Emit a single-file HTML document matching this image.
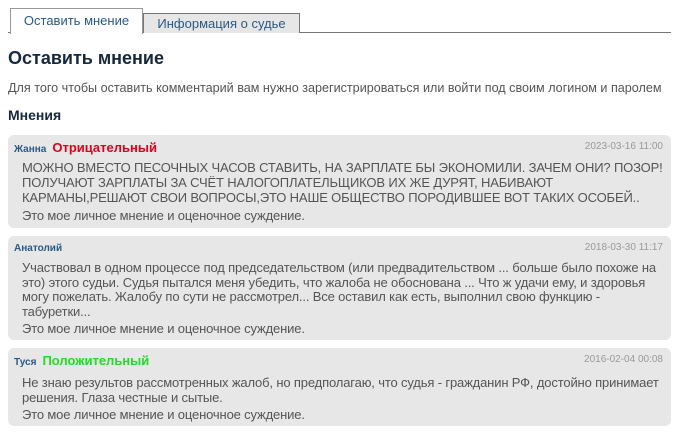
<!DOCTYPE html>
<html><head><meta charset="utf-8"><style>
body{margin:0;width:680px;height:441px;background:#fff;font-family:"Liberation Sans",Arial,sans-serif;position:relative;overflow:hidden}
.a{position:absolute;white-space:nowrap}
.tabline{position:absolute;left:8px;top:32px;width:663px;height:1px;background:#777}
.t1{position:absolute;left:10px;top:8px;width:131px;height:25px;border:1px solid #999;border-bottom:none;background:#fff;color:#2a5a85;font-size:13px;text-align:center;line-height:24px}
.t2{position:absolute;left:143px;top:13px;width:155px;height:19px;border:1px solid #777;border-bottom:none;background:#e6e6e6;color:#2a5a85;font-size:13px;text-align:center;line-height:20px}
.box{position:absolute;left:8px;width:663px;background:#e7e7e7;border-radius:6px}
.n{position:absolute;left:6px;font-size:10px;font-weight:bold;color:#2a5a85}
.r{font-size:13px;font-weight:bold;margin-left:6px}
.d{position:absolute;right:8px;font-size:10px;color:#999}
.tx{position:absolute;left:14px;font-size:13px;color:#555;line-height:15px;width:648px;letter-spacing:-0.15px}
</style></head><body>
<div class="tabline"></div>
<div class="t1">Оставить мнение</div>
<div class="t2">Информация о судье</div>
<div class="a" style="left:8px;top:48px;font-size:18px;font-weight:bold;color:#16283d">Оставить мнение</div>
<div class="a" style="left:8px;top:81px;font-size:12.6px;color:#555">Для того чтобы оставить комментарий вам нужно зарегистрироваться или войти под своим логином и паролем</div>
<div class="a" style="left:8px;top:107px;font-size:14px;font-weight:bold;color:#16283d">Мнения</div>

<div class="box" style="top:135px;height:93px">
<div class="n" style="top:5px">Жанна<span class="r" style="color:#e0001b">Отрицательный</span></div>
<div class="d" style="top:6px">2023-03-16 11:00</div>
<div class="tx" style="top:25px">МОЖНО ВМЕСТО ПЕСОЧНЫХ ЧАСОВ СТАВИТЬ, НА ЗАРПЛАТЕ БЫ ЭКОНОМИЛИ. ЗАЧЕМ ОНИ? ПОЗОР! ПОЛУЧАЮТ ЗАРПЛАТЫ ЗА СЧЁТ НАЛОГОПЛАТЕЛЬЩИКОВ ИХ ЖЕ ДУРЯТ, НАБИВАЮТ<br>КАРМАНЫ,РЕШАЮТ СВОИ ВОПРОСЫ,ЭТО НАШЕ ОБЩЕСТВО ПОРОДИВШЕЕ ВОТ ТАКИХ ОСОБЕЙ..</div>
<div class="tx" style="top:73px">Это мое личное мнение и оценочное суждение.</div>
</div>

<div class="box" style="top:236px;height:104px">
<div class="n" style="top:7px">Анатолий</div>
<div class="d" style="top:6px">2018-03-30 11:17</div>
<div class="tx" style="top:25px;line-height:14.6px">Участвовал в одном процессе под председательством (или предвадительством ... больше было похоже на<br>это) этого судьи. Судья пытался меня убедить, что жалоба не обоснована ... Что ж удачи ему, и здоровья<br>могу пожелать. Жалобу по сути не рассмотрел... Все оставил как есть, выполнил свою функцию -<br>табуретки...</div>
<div class="tx" style="top:85px">Это мое личное мнение и оценочное суждение.</div>
</div>

<div class="box" style="top:348px;height:78px">
<div class="n" style="top:5px">Туся<span class="r" style="color:#22dd22">Положительный</span></div>
<div class="d" style="top:6px">2016-02-04 00:08</div>
<div class="tx" style="top:27px">Не знаю результов рассмотренных жалоб, но предполагаю, что судья - гражданин РФ, достойно принимает<br>решения. Глаза честные и сытые.</div>
<div class="tx" style="top:59px">Это мое личное мнение и оценочное суждение.</div>
</div>
</body></html>
